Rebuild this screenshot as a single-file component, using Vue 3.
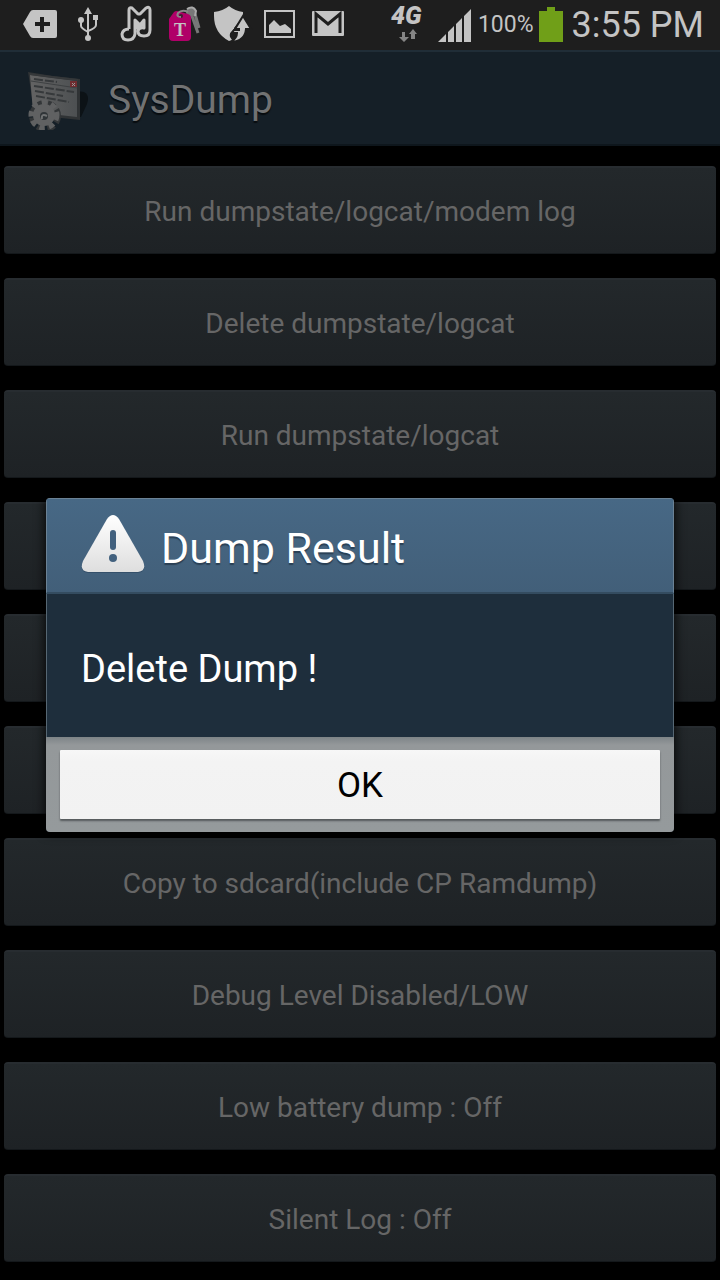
<script setup>
const actions = [
  'Run dumpstate/logcat/modem log',
  'Delete dumpstate/logcat',
  'Run dumpstate/logcat',
  '',
  '',
  '',
  'Copy to sdcard(include CP Ramdump)',
  'Debug Level Disabled/LOW',
  'Low battery dump : Off',
  'Silent Log : Off',
]
</script>

<template>
  <div class="screen">
    <div class="status">
      <div class="notifications">
        <svg viewBox="0 0 48 50" class="slot">
          <path fill="#c4c4c4" fill-rule="evenodd" d="M7 24 14 12Q15 10 17 10H39Q41 10 41 12V36Q41 38 39 38H17Q15 38 14 36ZM24 17V22H19V26H24V32H28V26H34V22H28V17Z" />
        </svg>
        <svg viewBox="0 0 48 50" class="slot">
          <g fill="none" stroke="#c4c4c4" stroke-width="2"><path d="M24 12V36M17 20V26Q17 28 24 32M32 18V25Q32 28 24 31" /></g>
          <g fill="#c4c4c4"><path d="M24 7 28 14H20ZM29 15H34V20H29Z" /><circle cx="17" cy="20" r="3" /><circle cx="24" cy="38" r="3" /></g>
        </svg>
        <svg viewBox="0 0 48 50" class="slot">
          <path fill="none" stroke="#c4c4c4" stroke-width="3" stroke-linejoin="round" d="M17 29V10Q17 7 20 8L26 14H28L34 8Q38 6 38 10V30Q38 36 32 36Q26 36 26 31Q27 27 32 28V20L28 25 23 20V34Q22 40 16 40Q10 40 10 34Q11 29 17 29" />
          <path fill="#c4c4c4" d="M22 20 28 25 33 20V25L28 28 26 31 22 27Z" />
        </svg>
        <svg viewBox="0 0 48 50" class="slot">
          <circle cx="31" cy="12" r="5" fill="#777" />
          <path d="M32 16 38 33M35 14 39 28" fill="none" stroke="#777" stroke-width="3" />
          <path d="M27 9Q33 5 36 11L35 16" fill="none" stroke="#aaa" stroke-width="2" />
          <path fill="#b00068" d="M9 19 14 12Q15 11 17 11L28 14Q31 15 31 18V37Q31 41 27 41H13Q9 41 9 37Z" />
          <circle cx="21" cy="16" r="2" fill="#402030" />
          <path fill="none" stroke="#888" stroke-width="2" d="M21 17Q16 17 18 13Q22 9 28 12" />
          <text x="20" y="36" text-anchor="middle" class="carrier">T</text>
        </svg>
        <svg viewBox="0 0 48 50" class="slot">
          <path fill="#c4c4c4" d="M6 12Q15 11 21 6Q27 11 35 12V17L26 28V29L24 31Q21 33 22 37L24 40 21 41Q6 33 6 16Z" />
          <path fill="#c4c4c4" stroke="#1e1e1e" stroke-width="2" d="M35 16 43 29H38Q37 41 23 42Q29 38 29 33H24L26 30H31V29H27Z" />
        </svg>
        <svg viewBox="0 0 48 50" class="slot">
          <rect x="9" y="11" width="29" height="26" fill="none" stroke="#c4c4c4" stroke-width="2" />
          <path fill="#c4c4c4" d="M13 33V25L18 20 24 26 29 24 35 29V33Z" />
        </svg>
        <svg viewBox="0 0 48 50" class="slot">
          <rect x="8" y="11" width="32" height="25" rx="1" fill="#c4c4c4" />
          <path d="M12 33V14L24 24 36 14V33" fill="none" stroke="#1e1e1e" stroke-width="3" />
        </svg>
      </div>
      <div class="system">
        <svg viewBox="0 0 40 50" class="network">
          <text x="3" y="24" class="four-g">4G</text>
          <path fill="#858585" d="M14 32H17V37H21L16 42 11 37H14ZM25 29 29 34H27V39H23V34H21Z" />
        </svg>
        <svg viewBox="0 0 34 50" class="signal">
          <path fill="#c4c4c4" d="M0 42 8 34V42ZM10 32 16 26V42H10ZM18 24 24 18V42H18ZM26 16 33 9V42H26Z" />
        </svg>
        <span class="percent">100%</span>
        <svg viewBox="0 0 24 50" class="battery"><path fill="#709f18" d="M8 7H16V11H24V42H0V11H8Z" /></svg>
        <span class="clock">3:55 PM</span>
      </div>
    </div>

    <header class="titlebar">
      <svg viewBox="0 0 64 64" class="app-icon">
        <defs><linearGradient id="paper-fill"><stop stop-color="#636363" /><stop offset="1" stop-color="#4d5052" /></linearGradient></defs>
        <path fill="#0c1216" d="M53 25 60 26Q66 29 63 38L57 51H52Z" />
        <path fill="#303335" d="M4 6 29 10 56 13 56 54 37 52 10 45Z" />
        <path fill="url(#paper-fill)" d="M6 9 28 12 53 15 53 51 9 46Z" />
        <path fill="#35383a" d="M5 7 28 10 54 13V15L6 9Z" />
        <path stroke="#3d4042" d="M7 15 53 22" />
        <rect x="46" y="15" width="7" height="6" fill="#702c30" />
        <path stroke="#999" d="M48 17 51 20M51 17 48 20" />
        <path d="M10 13 33 16M10 20 50 26M11 25 39 30M12 30 45 36" fill="none" stroke="#36393b" stroke-width="2" stroke-dasharray="9 2" />
        <circle cx="21" cy="50" r="11" fill="none" stroke="#333638" stroke-width="10" stroke-dasharray="6 3" />
        <circle cx="20" cy="49" r="12" fill="none" stroke="#606162" stroke-width="7" stroke-dasharray="5 4" />
        <circle cx="20" cy="49" r="11" fill="#606162" />
        <circle cx="20" cy="50" r="4" fill="#303538" /><path d="M18 53Q17 47 23 50" stroke="#707273" stroke-width="2" fill="none" />
      </svg>
      <h1>SysDump</h1>
    </header>

    <main class="actions">
      <button v-for="(label, i) in actions" :key="i" type="button" class="action">{{ label }}</button>
    </main>

    <div class="overlay">
      <section class="dialog" role="alertdialog" aria-labelledby="dialog-title" aria-describedby="dialog-message">
        <div class="dialog-head">
          <svg viewBox="0 0 64 64" class="warning">
            <defs><linearGradient id="warning-fill" x2="0" y2="1"><stop stop-color="#fff" /><stop offset="1" stop-color="#dedede" /></linearGradient></defs>
            <path fill="#35506a" d="M26 6Q32 -2 38 6L62 48Q66 58 57 59H7Q-2 58 2 48Z" />
            <path fill="url(#warning-fill)" d="M26 5Q32 -3 38 5L62 47Q66 57 57 58H7Q-2 57 2 47Z" />
            <path stroke="#42617e" stroke-width="6" stroke-linecap="round" d="M32 19V33" />
            <circle cx="32" cy="44" r="4" fill="#42617e" />
          </svg>
          <h2 id="dialog-title">Dump Result</h2>
        </div>
        <p id="dialog-message" class="message">Delete Dump !</p>
        <div class="dialog-foot"><button type="button" class="ok">OK</button></div>
      </section>
    </div>
  </div>
</template>

<style>
body { margin: 0; background: #000; }
</style>

<style scoped>
.screen { position: relative; box-sizing: border-box; min-height: 100vh; overflow: hidden; background: #000; font-family: Roboto, "Noto Sans", sans-serif; }
.screen *, .screen *::before { box-sizing: border-box; }
.status { display: flex; justify-content: space-between; height: 50px; padding: 0 16px; background: #1e1e1e; color: #c4c4c4; }
.notifications, .system { display: flex; }
.slot { width: 48px; height: 50px; }
.carrier { fill: #c4c4c4; font: bold 18px "Liberation Serif", serif; }
.system { align-items: center; white-space: nowrap; }
.network { width: 40px; height: 50px; margin-right: 10px; }
.four-g { fill: #c4c4c4; font: italic 900 25px Roboto, sans-serif; }
.signal { width: 34px; height: 50px; margin-right: 6px; }
.percent { font-size: 23px; line-height: 50px; }
.battery { width: 24px; height: 50px; margin: 0 9px 0 5px; }
.clock { font-size: 36px; line-height: 48px; }
.titlebar { display: flex; align-items: center; height: 96px; padding: 0 24px; gap: 20px; background: #151f27; border-top: 2px solid #202d37; border-bottom: 2px solid #0e161c; }
.app-icon { width: 64px; height: 64px; }
h1, h2, p { margin: 0; font-weight: 400; }
h1 { padding-top: 4px; font-size: 39px; line-height: 48px; color: #717273; text-shadow: 0 2px 1px #080c0f; }
.actions { display: flex; flex-direction: column; gap: 24px; padding: 20px 4px 18px; }
.action { height: 88px; padding: 2px 16px 0; border: 0; border-top: 2px solid #272c30; border-bottom: 1px solid #14181b; border-radius: 4px; background: linear-gradient(#23282b, #1e2225); color: #666; font: 28px/36px Roboto, "Noto Sans", sans-serif; }
.overlay { position: absolute; inset: 50px 0 0; display: flex; align-items: center; justify-content: center; padding: 0 46px; }
.dialog { width: 100%; border-radius: 4px; overflow: hidden; background: #1e2e3c; box-shadow: 0 0 12px #000; }
.dialog-head { display: flex; align-items: center; gap: 16px; height: 96px; padding: 0 34px; background: linear-gradient(#476885, #425f79); border: 1px solid #6b8295; border-bottom: 2px solid #344c60; }
.warning { width: 64px; height: 64px; }
h2 { padding-top: 4px; color: #fff; font-size: 43px; line-height: 52px; text-shadow: 0 2px 1px #2a4055; }
.message { height: 143px; padding: 51px 34px 0; border: solid #566773; border-width: 0 1px; color: #fff; font-size: 38px; line-height: 48px; }
.dialog-foot { height: 95px; padding: 13px 14px; background: linear-gradient(#7d8487, #94989a 8px, #959a9c); }
.ok { display: block; width: 100%; height: 69px; padding: 2px 0 0; border: 0; border-radius: 1px; background: linear-gradient(#f7f7f7, #f3f3f3 12px, #f2f2f2); color: #000; font: 35px/44px Roboto, "Noto Sans", sans-serif; box-shadow: 0 2px 2px #55595b; }
</style>
